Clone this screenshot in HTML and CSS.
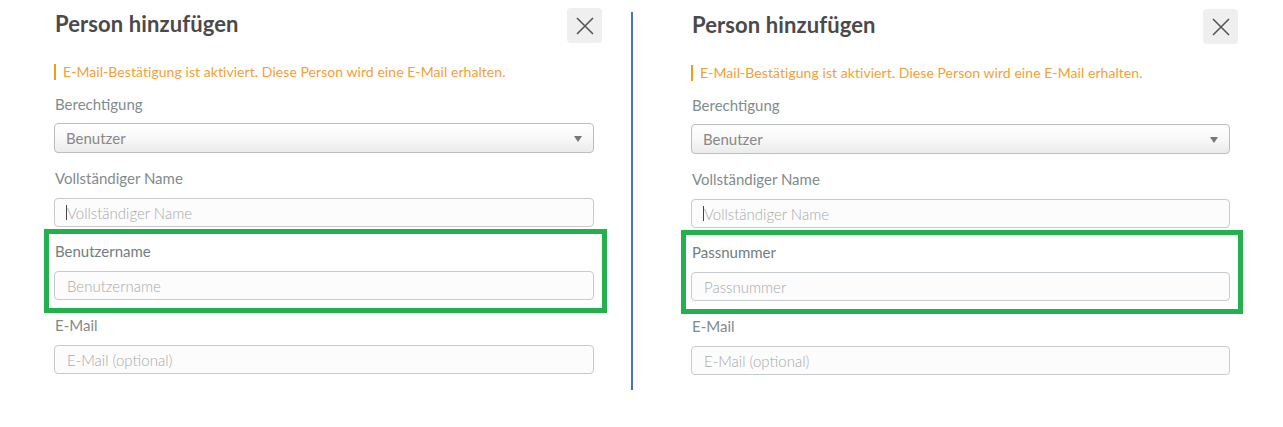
FILE: index.html
```
<!DOCTYPE html>
<html lang="de">
<head>
    <meta charset="UTF-8">
    <meta name="viewport" content="width=device-width, initial-scale=1.0">
    <title>Person hinzufügen</title>
    <link rel="stylesheet" href="styles.css">
</head>
<body>
    <div class="page">
        <div class="panel">
            <div class="panel-head">
                <h2 class="title">Person hinzufügen</h2>
                <button class="close" type="button" aria-label="Schließen">
                    <svg width="18" height="18" viewBox="0 0 18 18"><path d="M1 1L17 17M17 1L1 17" stroke="#555" stroke-width="1.6" fill="none"/></svg>
                </button>
            </div>
            <div class="fields">
                <div class="notice">E-Mail-Bestätigung ist aktiviert. Diese Person wird eine E-Mail erhalten.</div>
                <div class="field first">
                    <label>Berechtigung</label>
                    <div class="select">Benutzer<span class="arrow"></span></div>
                </div>
                <div class="field">
                    <label>Vollständiger Name</label>
                    <div class="input-wrap"><input type="text" placeholder="Vollständiger Name"><span class="caret"></span></div>
                </div>
                <div class="field marked">
                    <label>Benutzername</label>
                    <input type="text" placeholder="Benutzername">
                </div>
                <div class="field">
                    <label>E-Mail</label>
                    <input type="text" placeholder="E-Mail (optional)">
                </div>
            </div>
        </div>

        <div class="divider"></div>

        <div class="panel right">
            <div class="panel-head">
                <h2 class="title">Person hinzufügen</h2>
                <button class="close" type="button" aria-label="Schließen">
                    <svg width="18" height="18" viewBox="0 0 18 18"><path d="M1 1L17 17M17 1L1 17" stroke="#555" stroke-width="1.6" fill="none"/></svg>
                </button>
            </div>
            <div class="fields">
                <div class="notice">E-Mail-Bestätigung ist aktiviert. Diese Person wird eine E-Mail erhalten.</div>
                <div class="field first">
                    <label>Berechtigung</label>
                    <div class="select">Benutzer<span class="arrow"></span></div>
                </div>
                <div class="field">
                    <label>Vollständiger Name</label>
                    <div class="input-wrap"><input type="text" placeholder="Vollständiger Name"><span class="caret"></span></div>
                </div>
                <div class="field marked">
                    <label>Passnummer</label>
                    <input type="text" placeholder="Passnummer">
                </div>
                <div class="field">
                    <label>E-Mail</label>
                    <input type="text" placeholder="E-Mail (optional)">
                </div>
            </div>
        </div>
    </div>
</body>
</html>
```

FILE: styles.css
```
body {
    margin: 0;
    background: #fff;
    font-family: Lato, "Open Sans", sans-serif;
}
.page {
    display: flex;
    align-items: flex-start;
    padding-left: 54px;
}
.panel {
    width: 548px;
    padding-top: 8px;
}
.panel.right {
    width: 547px;
    margin-left: 58px;
    padding-top: 9px;
}
.divider {
    width: 2px;
    height: 378px;
    margin-top: 12px;
    margin-left: 29px;
    background: #4472c4;
}
.panel-head {
    display: flex;
    justify-content: space-between;
    align-items: flex-start;
}
.title {
    margin: 2px 0 0 1px;
    font-size: 22px;
    line-height: 28px;
    font-weight: bold;
    letter-spacing: 0.1px;
    color: #4a4a4a;
}
.close {
    width: 35px;
    height: 35px;
    border: none;
    border-radius: 4px;
    background: #efefef;
    padding: 0;
    display: flex;
    align-items: center;
    justify-content: center;
}
.fields {
    padding-right: 8px;
}
.notice {
    margin-top: 21px;
    border-left: 2px solid #f39c12;
    padding-left: 7px;
    font-size: 14px;
    line-height: 16px;
    letter-spacing: 0.06px;
    color: #f5a033;
}
.field {
    margin-top: 15px;
}
.field.first {
    margin-top: 14px;
}
.field label {
    display: block;
    margin-left: 1px;
    margin-bottom: 10px;
    font-size: 15px;
    line-height: 20px;
    color: #7f8c8d;
}
.field.first label {
    margin-bottom: 9px;
}
.field.marked {
    margin: 2px -13px -13px -10px;
    padding: 7px 8px 8px 5px;
    border: 5px solid #22b14c;
}
.field.marked label {
    color: #727e7f;
}
.select {
    position: relative;
    box-sizing: border-box;
    height: 30px;
    padding-left: 11px;
    border: 1px solid #b9bec2;
    border-radius: 4px;
    background: linear-gradient(#ffffff 0%, #f9f9f9 45%, #ebebeb 100%);
    font-size: 15px;
    line-height: 28px;
    color: #888;
}
.arrow {
    position: absolute;
    right: 11px;
    top: 12px;
    border-left: 4px solid transparent;
    border-right: 4px solid transparent;
    border-top: 6px solid #777;
}
.input-wrap {
    position: relative;
}
.caret {
    position: absolute;
    left: 12px;
    top: 7px;
    width: 1px;
    height: 15px;
    background: #444;
}
input {
    display: block;
    box-sizing: border-box;
    width: 100%;
    height: 29px;
    margin: 0;
    padding: 0 12px;
    border: 1px solid #c6cbcf;
    border-radius: 4px;
    background: #fcfcfc;
    font-family: Lato, "Open Sans", sans-serif;
    font-size: 15px;
    color: #555;
    outline: none;
}
input::placeholder {
    color: #a9a9a9;
    font-weight: 300;
}
```
